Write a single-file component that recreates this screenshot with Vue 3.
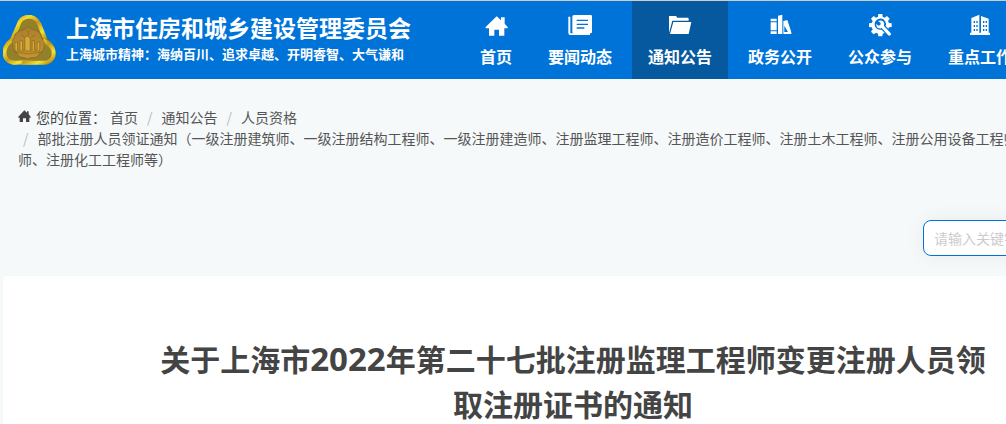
<template>
  <div class="page">
    <header class="header">
      <a class="brand" href="#">
        <svg class="brand__logo" viewBox="0 0 160 150" aria-hidden="true">
          <defs>
            <linearGradient id="gold" x1="0" y1="0" x2="1" y2="1">
              <stop offset="0" stop-color="#b98d16" />
              <stop offset="0.25" stop-color="#f3dc2c" />
              <stop offset="0.5" stop-color="#c29a1c" />
              <stop offset="0.75" stop-color="#f4e434" />
              <stop offset="1" stop-color="#a67b12" />
            </linearGradient>
            <linearGradient id="bronze" x1="0" y1="0" x2="0" y2="1">
              <stop offset="0" stop-color="#a97f2c" />
              <stop offset="1" stop-color="#c6952f" />
            </linearGradient>
          </defs>
          <path
            d="M42 30C50-6 102-6 114 26L128 72C151 78 163 101 155 124C149 143 136 149 116 149H34C8 149-3 127 2 106C5 93 16 88 24 76Z"
            fill="#94802a"
          />
          <path d="M25 79L45 34C52-4 98-3 109 26L129 76" fill="none" stroke="url(#gold)" stroke-width="12" />
          <path d="M25 76C2 93-1 118 12 134C21 145 34 144 48 143L88 143" fill="none" stroke="url(#gold)" stroke-width="12" />
          <path d="M58 144H123C148 143 158 123 151 104C147 91 134 84 121 76" fill="none" stroke="url(#gold)" stroke-width="12" />
          <path
            d="M76 34C86 45 107 43 115 60C113 72 128 77 124 95C123 110 109 114 104 125C91 132 84 124 75 133C65 125 57 132 46 122C42 110 29 107 30 92C24 79 36 72 36 58C47 45 67 47 76 34Z"
            fill="url(#bronze)"
            stroke="#7d6124"
            stroke-width="2"
          />
          <path
            d="M36 82H44V105H51V77H59V105H66V68L73 63L82 69V105H88V77H95V105H103V81H111V108H36Z"
            fill="#d5ac35"
            stroke="#886322"
            stroke-width="2"
          />
          <path d="M34 112Q76 121 118 112M76 47V62M55 60L65 65M97 60L87 65" fill="none" stroke="#8a6522" stroke-width="2" />
        </svg>
        <span class="brand__text">
          <strong>上海市住房和城乡建设管理委员会</strong>
          <span>上海城市精神：海纳百川、追求卓越、开明睿智、大气谦和</span>
        </span>
      </a>

      <nav class="nav">
        <a
          v-for="item in navItems"
          :key="item.label"
          href="#"
          class="nav__item"
          :class="{ 'nav__item--active': item.active }"
        >
          <svg class="nav__icon" viewBox="0 0 72 72" aria-hidden="true">
            <path :d="item.icon" fill="currentColor" fill-rule="evenodd" />
          </svg>
          <span>{{ item.label }}</span>
        </a>
      </nav>
    </header>

    <main class="container">
      <nav class="location">
        <svg class="location__icon" viewBox="0 0 39 39" aria-hidden="true">
          <path d="M19 1L27 8V4H32V13L38 20V23H34V36H24V25H15V36H5V23H1V20Z" fill="currentColor" />
        </svg>
        <span class="location__label">您的位置：</span>
        <ol class="breadcrumb">
          <li v-for="crumb in crumbs" :key="crumb"><a href="#">{{ crumb }}</a></li>
        </ol>
      </nav>

      <form class="search" @submit.prevent>
        <input v-model="keyword" type="text" placeholder="请输入关键字" aria-label="请输入关键字" />
      </form>

      <article class="article">
        <h1>关于上海市<span class="year">2022</span>年第二十七批注册监理工程师变更注册人员领取注册证书的通知</h1>
      </article>
    </main>
  </div>
</template>

<script setup>
import { ref } from "vue";

const keyword = ref("");

const navItems = [
  {
    label: "首页",
    icon: "M38 10L51 22V13H62V32L71 42V46H61V68H45V50H31V68H15V46H5V42Z",
  },
  {
    label: "要闻动态",
    icon: "M1 11H7V59Q7 61 10 61H66V66H7Q1 66 1 60ZM18 6H68Q72 6 72 10V57Q72 61 68 61H17Q13 61 13 57V11Q13 6 18 6ZM26 20V24H60V20ZM26 32V36H60V32ZM26 43V47H49V43Z",
  },
  {
    label: "通知公告",
    active: true,
    icon: "M3 9H24L28 14H59Q62 14 62 18V23H13L3 60ZM16 27H70L62 63H6Z",
  },
  {
    label: "政务公开",
    icon: "M8 17H26V25H8ZM8 28H26V52H8ZM8 55H26V63H8ZM30 8L43 5V63H30ZM46 24L58 21L70 58V63H46ZM49 57H60L49 38Z",
  },
  {
    label: "公众参与",
    icon: "M31 3H43L44 11L50 14L57 9L65 17L60 24L63 30L71 31V42L63 43L61 47L53 39A17 17 0 1 0 41 50L50 60L44 62L43 70H31L30 62L24 59L17 64L9 56L14 49L11 43L3 42V31L11 30L14 24L9 17L17 9L24 14L30 11ZM30 24L38 30L37 36L31 38L25 32Q24 44 34 46Q38 47 41 45L60 66Q64 70 68 66Q71 63 67 59L48 39Q51 30 45 25Q38 20 30 24Z",
  },
  {
    label: "重点工作",
    icon: "M10 15L34 5V59H39V9L62 17V59H66V66H6V59H10ZM17 24V30H21V24ZM25 24V30H29V24ZM17 36V42H21V36ZM25 36V42H29V36ZM17 48V54H21V48ZM25 48V54H29V48ZM45 24V30H49V24ZM53 24V30H57V24ZM45 36V42H49V36ZM53 36V42H57V36ZM45 48V54H49V48ZM53 48V54H57V48Z",
  },
];

const crumbs = [
  "首页",
  "通知公告",
  "人员资格",
  "部批注册人员领证通知（一级注册建筑师、一级注册结构工程师、一级注册建造师、注册监理工程师、注册造价工程师、注册土木工程师、注册公用设备工程师、注册电气工程师、注册化工工程师等）",
];
</script>

<style>
body {
  margin: 0;
  background: #f5f9fa;
}
</style>

<style scoped>
.page {
  height: 100vh;
  overflow: hidden;
  background: #f5f9fa;
  color: #444;
  font-family: "Noto Sans CJK SC", sans-serif;
  font-size: 14px;
  line-height: 21px;
}

a {
  color: inherit;
  text-decoration: none;
}

.header {
  display: flex;
  align-items: stretch;
  gap: 53px;
  min-width: 1140px;
  padding-left: 3px;
  border-top: 1px solid #ccc;
  background: #0073d8;
  color: #fff;
}

.brand {
  display: flex;
  align-items: center;
  gap: 10px;
  flex: none;
}

.brand__logo {
  width: 53px;
  height: 50px;
}

.brand__text {
  display: flex;
  flex-direction: column;
  width: 345px;
  padding-bottom: 2px;
  white-space: nowrap;
}

.brand__text strong {
  font-size: 23px;
  line-height: 30px;
}

.brand__text span {
  font-size: 13px;
  font-weight: 700;
  line-height: 24px;
}

.nav {
  display: flex;
  gap: 4px;
}

.nav__item {
  display: flex;
  flex-direction: column;
  align-items: center;
  gap: 7px;
  padding: 12px 16px 10px;
  font-size: 16px;
  font-weight: 700;
  line-height: 25px;
  white-space: nowrap;
}

.nav__item--active {
  background: #06589f;
}

.nav__icon {
  width: 24px;
  height: 24px;
}

.container {
  width: 1140px;
  margin: 0 auto 0 3px;
}

.location {
  padding: 28px 15px 50px;
}

.location__icon {
  width: 13px;
  height: 13px;
  margin-right: 5px;
}

.location__label {
  margin-right: 4px;
}

.breadcrumb {
  display: inline;
  margin: 0;
  padding: 0;
  list-style: none;
}

.breadcrumb li {
  display: inline-block;
  margin-right: 4px;
  color: #555;
}

.breadcrumb li:last-child {
  margin-right: 0;
}

.breadcrumb li + li::before {
  content: "/";
  padding: 0 9px 0 5px;
  color: #bbb;
}

.search {
  display: flex;
  justify-content: flex-end;
}

.search input {
  box-sizing: border-box;
  width: 220px;
  height: 36px;
  padding: 2px 10px;
  border: 1px solid #0073d8;
  border-radius: 8px;
  background: #fff;
  box-shadow: 0 0 20px rgba(0, 0, 0, 0.06);
  font-family: inherit;
  font-size: 14px;
}

.search input::placeholder {
  color: #ccc;
  opacity: 1;
}

.article {
  margin-top: 20px;
  padding: 60px 150px;
  border-radius: 4px;
  background: #fff;
}

.article h1 {
  margin: 0;
  font-size: 30px;
  line-height: 45px;
  text-align: center;
}

.year {
  font-family: "Open Sans", sans-serif;
  font-size: 33px;
}
</style>
